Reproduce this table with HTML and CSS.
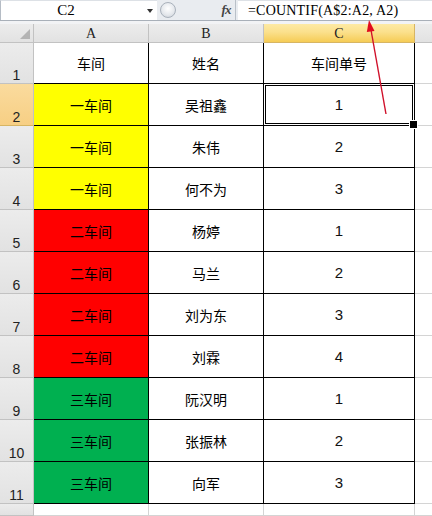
FILE: index.html
```html
<!DOCTYPE html>
<html>
<head>
<meta charset="utf-8">
<link rel="stylesheet" href="styles.css">
</head>
<body>
<div class="app">
  <div class="fbar">
    <div class="namebox"><span class="nb-text">C2</span><span class="nb-arrow"></span></div>
    <div class="mid">
      <span class="grip"></span>
      <span class="fx">fx</span>
    </div>
    <div class="formula">=COUNTIF(A$2:A2, A2)</div>
  </div>
  <div class="band"></div>
  <div class="sheet">
    <div class="h corner"><span class="tri"></span></div>
    <div class="h col">A</div>
    <div class="h col">B</div>
    <div class="h col sel">C</div>
    <div class="h col last"></div>

    <div class="h row">1</div>
    <div class="d">车间</div><div class="d">姓名</div><div class="d">车间单号</div><div class="g"></div>

    <div class="h row rsel">2</div>
    <div class="d y">一车间</div><div class="d">吴祖鑫</div><div class="d num active">1</div><div class="g"></div>

    <div class="h row">3</div>
    <div class="d y">一车间</div><div class="d">朱伟</div><div class="d num">2</div><div class="g"></div>

    <div class="h row">4</div>
    <div class="d y">一车间</div><div class="d">何不为</div><div class="d num">3</div><div class="g"></div>

    <div class="h row">5</div>
    <div class="d r">二车间</div><div class="d">杨婷</div><div class="d num">1</div><div class="g"></div>

    <div class="h row">6</div>
    <div class="d r">二车间</div><div class="d">马兰</div><div class="d num">2</div><div class="g"></div>

    <div class="h row">7</div>
    <div class="d r">二车间</div><div class="d">刘为东</div><div class="d num">3</div><div class="g"></div>

    <div class="h row">8</div>
    <div class="d r">二车间</div><div class="d">刘霖</div><div class="d num">4</div><div class="g"></div>

    <div class="h row">9</div>
    <div class="d gr">三车间</div><div class="d">阮汉明</div><div class="d num">1</div><div class="g"></div>

    <div class="h row">10</div>
    <div class="d gr">三车间</div><div class="d">张振林</div><div class="d num">2</div><div class="g"></div>

    <div class="h row">11</div>
    <div class="d gr">三车间</div><div class="d">向军</div><div class="d num">3</div><div class="g"></div>

    <div class="h row"></div>
    <div class="e"></div><div class="e"></div><div class="e"></div><div class="g"></div>
  </div>
  <svg class="arrow" width="432" height="516" viewBox="0 0 432 516">
    <line x1="386" y1="114" x2="371" y2="30" stroke="#d0102a" stroke-width="1.4"/>
    <polygon points="369,20 374.5,31 366.8,32" fill="#e00a1e"/>
  </svg>
</div>
</body>
</html>
```

FILE: styles.css
```css
* { box-sizing: border-box; }
html, body { margin: 0; padding: 0; background: #fff; }
.app {
  position: relative;
  width: 432px;
  height: 516px;
  overflow: hidden;
  font-family: "Liberation Sans", "Noto Sans CJK SC", sans-serif;
}
.fbar {
  display: flex;
  height: 21px;
  background: #e9ecf0;
  border-bottom: 1px solid #a9b0b9;
}
.namebox {
  width: 157px;
  height: 20px;
  background: #fff;
  border-left: 1px solid #b5bcc5;
  border-top: 1px solid #dde1e6;
  display: flex;
  align-items: center;
  position: relative;
}
.nb-text {
  flex: 1;
  text-align: center;
  font-family: "Liberation Serif", serif;
  font-size: 15px;
  padding-right: 16px;
  color: #000;
}
.nb-arrow {
  width: 0;
  height: 0;
  border-left: 3.5px solid transparent;
  border-right: 3.5px solid transparent;
  border-top: 4px solid #333;
  margin-right: 4px;
}
.mid {
  width: 81px;
  display: flex;
  align-items: center;
  position: relative;
}
.grip {
  width: 16px;
  height: 16px;
  border-radius: 50%;
  border: 1px solid #a9b1bb;
  background: radial-gradient(circle at 50% 40%, #ffffff 0%, #e6e9ed 55%, #c9ced5 100%);
  margin-left: 3px;
}
.fx {
  margin-left: 42px;
  font-family: "Liberation Serif", serif;
  font-style: italic;
  font-weight: bold;
  font-size: 13px;
  color: #444;
  letter-spacing: -1px;
  width: 18px;
  text-align: center;
  border-right: 1px solid #b9c0c8;
  height: 20px;
  line-height: 19px;
  padding-right: 1px;
}
.formula {
  flex: 1;
  background: #fff;
  border-top: 1px solid #dde1e6;
  font-family: "Liberation Serif", serif;
  font-size: 14px;
  letter-spacing: 0.2px;
  line-height: 19px;
  padding-left: 10px;
  color: #000;
  white-space: nowrap;
}
.band {
  height: 3px;
  background: #f2f3f5;
}
.sheet {
  display: grid;
  grid-template-columns: 34px 115px 115px 151px 1fr;
  grid-template-rows: 19px 41px repeat(10, 42px) 1fr;
  height: 492px;
}
.sheet > div {
  border-right: 1px solid #d4d4d4;
  border-bottom: 1px solid #d4d4d4;
}
.sheet > .h {
  background: linear-gradient(#ececec, #e2e2e2);
  border-right: 1px solid #c2c2c2;
  border-bottom: 1px solid #c2c2c2;
  color: #222;
}
.corner {
  display: flex;
  justify-content: flex-end;
  align-items: flex-end;
  padding: 0 3px 3px 0;
}
.tri {
  width: 10px;
  height: 10px;
  background: #b4b4b4;
  clip-path: polygon(100% 0, 100% 100%, 0 100%);
}
.col {
  display: flex;
  align-items: center;
  justify-content: center;
  font-family: "Liberation Serif", serif;
  font-size: 14px;
  padding-top: 1px;
}
.sheet > .col.sel {
  background: linear-gradient(#fdeaa4 0%, #fbe08c 45%, #f6cc55 100%);
  border-right: 1px solid #d7b563;
  border-bottom: 1px solid #d7b563;
}
.sheet > .col.last { border-right: none; }
.row {
  display: flex;
  align-items: flex-end;
  justify-content: center;
  font-family: "Liberation Sans", sans-serif;
  font-size: 14px;
  padding-bottom: 1px;
  line-height: 14px;
}
.sheet > .row.rsel {
  background: linear-gradient(#fadb9e, #f7cf84);
  border-bottom: 1px solid #d7b563;
}
.sheet > .d {
  border-right: 1px solid #000;
  border-bottom: 1px solid #000;
  display: flex;
  align-items: center;
  justify-content: center;
  font-family: "Noto Sans CJK SC", sans-serif;
  font-size: 14px;
  color: #000;
}
.sheet > .d.num {
  font-family: "Liberation Sans", sans-serif;
  font-size: 15px;
  color: #111;
}
.y { background: #ffff00; }
.r { background: #ff0000; }
.gr { background: #00b050; }
.sheet > .g { border-right: none; }
.active {
  position: relative;
  box-shadow: inset 0 0 0 1px #fff, inset 0 0 0 2px #000;
}
.active::after {
  content: "";
  position: absolute;
  right: -4px;
  bottom: -4px;
  width: 7px;
  height: 7px;
  background: #000;
  border: 1px solid #fff;
}
.arrow {
  position: absolute;
  left: 0;
  top: 0;
  pointer-events: none;
}
```
